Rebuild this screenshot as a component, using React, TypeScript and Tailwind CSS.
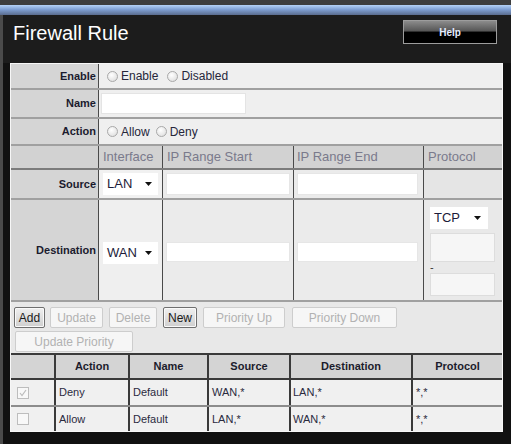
import React from "react";

function Radio() {
  return (
    <span className="inline-block w-[11px] h-[11px] rounded-full border border-[#a9a9a9] bg-[radial-gradient(circle_at_40%_35%,#ffffff,#d9d9d9)] shrink-0" />
  );
}

function Arrow() {
  return (
    <svg width="7" height="4" viewBox="0 0 7 4" className="shrink-0">
      <path d="M0 0 L7 0 L3.5 4 Z" fill="#111" />
    </svg>
  );
}

function Select({ label, w, pr }: { label: string; w: string; pr: string }) {
  return (
    <div className={`${w} h-[22px] bg-white flex items-center justify-between pl-[4px] ${pr} text-[13px] text-[#1c1c3a]`}>
      <span>{label}</span>
      <Arrow />
    </div>
  );
}

function Btn({ label, w, on }: { label: string; w: string; on?: boolean }) {
  return (
    <div
      className={
        on
          ? `${w} h-[21px] flex items-center justify-center rounded-[2px] border border-[#6f6f6f] bg-[linear-gradient(to_bottom,#f0f0f0,#cfcfcf)] text-[12px] text-[#1a1a1a] shadow-[inset_0_0_0_1px_#fafafa]`
          : `${w} h-[21px] flex items-center justify-center rounded-[2px] border border-[#cdcdcd] bg-[#f6f6f6] text-[12px] text-[#b2b2b2]`
      }
    >
      {label}
    </div>
  );
}

function Check({ checked }: { checked?: boolean }) {
  return (
    <span className="w-[12px] h-[12px] border border-[#bdbdbd] bg-[#f8f8f8] flex items-center justify-center">
      {checked ? (
        <svg width="8" height="8" viewBox="0 0 8 8">
          <path d="M1 4 L3 6.5 L7 1" stroke="#bcbcbc" strokeWidth="1.2" fill="none" />
        </svg>
      ) : null}
    </span>
  );
}

export default function App() {
  const labelCell =
    "w-[88px] shrink-0 border-r border-[#4a4a4a] bg-[#d5d5d5] flex items-center justify-end pr-[2px] text-[11px] font-bold text-[#1b1b2e]";
  return (
    <div className="w-[511px] h-[444px] overflow-hidden bg-[#111111] font-['Liberation_Sans',Arial,sans-serif]">
      <div className="h-[5px] bg-[#3d3d3d]" />
      <div className="h-[10px] bg-[linear-gradient(to_bottom,#b4d1f6,#7f9fd2_45%,#5a6c8e)]" />
      <div className="h-[429px] border-l-[3px] border-[#4b4b4b] flex flex-col">
        <div className="h-[48px] bg-[#1c1c1c] flex justify-between items-start pl-[10px] pr-[14px]">
          <div className="pt-[6px] text-[20px] leading-[24px] text-white">Firewall Rule</div>
          <div className="mt-[5px] w-[94px] h-[24px] border border-[#9d9d9d] bg-[linear-gradient(to_bottom,#8c8c8c_0%,#555555_46%,#000000_50%,#000000_100%)] flex items-center justify-center text-[10px] font-bold text-[#e4ecff]">
            Help
          </div>
        </div>
        <div className="ml-[7px] w-[493px] h-[369px] border border-[#f7f7f7] flex flex-col">
          {/* Enable */}
          <div className="flex h-[26px] border-b-2 border-[#a0a0a0]">
            <div className={labelCell}>Enable</div>
            <div className="flex-1 bg-[#efefef] flex items-center pl-[8px] text-[12px] text-[#26263a]">
              <Radio />
              <span className="ml-[3px]">Enable</span>
              <span className="ml-[9px]" />
              <Radio />
              <span className="ml-[3px]">Disabled</span>
            </div>
          </div>
          {/* Name */}
          <div className="flex h-[29px] border-b-2 border-[#a0a0a0]">
            <div className={labelCell}>Name</div>
            <div className="flex-1 bg-[#efefef] pl-[2px] pt-[3px]">
              <div className="w-[145px] h-[21px] bg-white border border-[#e4e4e4]" />
            </div>
          </div>
          {/* Action */}
          <div className="flex h-[27px] border-b-2 border-[#a0a0a0]">
            <div className={labelCell}>Action</div>
            <div className="flex-1 bg-[#efefef] flex items-center pl-[8px] text-[12px] text-[#26263a]">
              <Radio />
              <span className="ml-[3px]">Allow</span>
              <span className="ml-[6px]" />
              <Radio />
              <span className="ml-[3px]">Deny</span>
            </div>
          </div>
          {/* Header */}
          <div className="flex h-[24px] border-b-2 border-[#7c7c7c] text-[13px] text-[#7a7a8c]">
            <div className="w-[88px] shrink-0 border-r border-[#4a4a4a] bg-[#d2d2d2]" />
            <div className="w-[64px] shrink-0 border-r border-[#4a4a4a] bg-[#d2d2d2] flex items-center pl-[4px]">Interface</div>
            <div className="w-[131px] shrink-0 border-r border-[#4a4a4a] bg-[#d2d2d2] flex items-center pl-[4px]">IP Range Start</div>
            <div className="w-[130px] shrink-0 border-r border-[#4a4a4a] bg-[#d2d2d2] flex items-center pl-[3px]">IP Range End</div>
            <div className="flex-1 bg-[#d2d2d2] flex items-center pl-[4px]">Protocol</div>
          </div>
          {/* Source */}
          <div className="flex h-[30px] border-b-2 border-[#a0a0a0]">
            <div className={labelCell}>Source</div>
            <div className="w-[64px] shrink-0 border-r border-[#4a4a4a] bg-[#f1f1f1] pl-[4px] pt-[3px]">
              <Select label="LAN" w="w-[55px]" pr="pr-[6px]" />
            </div>
            <div className="w-[131px] shrink-0 border-r border-[#4a4a4a] bg-[#ebebeb] pl-[3px] pt-[3px]">
              <div className="w-[124px] h-[22px] bg-white border border-[#e6e6e6]" />
            </div>
            <div className="w-[130px] shrink-0 border-r border-[#4a4a4a] bg-[#ebebeb] pl-[3px] pt-[3px]">
              <div className="w-[121px] h-[22px] bg-white border border-[#e6e6e6]" />
            </div>
            <div className="flex-1 bg-[#e5e5e5]" />
          </div>
          {/* Destination */}
          <div className="flex h-[102px] border-b-2 border-[#a0a0a0]">
            <div className={labelCell}>Destination</div>
            <div className="w-[64px] shrink-0 border-r border-[#4a4a4a] bg-[#efefef] pl-[4px] pt-[42px]">
              <Select label="WAN" w="w-[55px]" pr="pr-[6px]" />
            </div>
            <div className="w-[131px] shrink-0 border-r border-[#4a4a4a] bg-[#ebebeb] pl-[3px] pt-[42px]">
              <div className="w-[124px] h-[20px] bg-white border border-[#e6e6e6]" />
            </div>
            <div className="w-[130px] shrink-0 border-r border-[#4a4a4a] bg-[#ebebeb] pl-[3px] pt-[42px]">
              <div className="w-[121px] h-[20px] bg-white border border-[#e6e6e6]" />
            </div>
            <div className="flex-1 bg-[#e9e9e9] pl-[6px] pt-[7px] flex flex-col">
              <Select label="TCP" w="w-[58px]" pr="pr-[7px]" />
              <div className="mt-[4px] w-[65px] h-[29px] bg-[#f6f6f6] border border-[#dddddd]" />
              <div className="h-[10px] text-[11px] leading-[10px] text-[#333]">-</div>
              <div className="mt-[1px] w-[65px] h-[23px] bg-[#f6f6f6] border border-[#dddddd]" />
            </div>
          </div>
          {/* Buttons */}
          <div className="h-[51px] bg-[#e8e8e8] flex flex-col pl-[3px] pt-[5px]">
            <div className="flex">
              <Btn label="Add" w="w-[31px]" on />
              <div className="ml-[5px]"><Btn label="Update" w="w-[53px]" /></div>
              <div className="ml-[6px]"><Btn label="Delete" w="w-[48px]" /></div>
              <div className="ml-[6px]"><Btn label="New" w="w-[34px]" on /></div>
              <div className="ml-[6px]"><Btn label="Priority Up" w="w-[82px]" /></div>
              <div className="ml-[7px]"><Btn label="Priority Down" w="w-[105px]" /></div>
            </div>
            <div className="mt-[3px] ml-[1px]">
              <Btn label="Update Priority" w="w-[118px]" />
            </div>
          </div>
          {/* Table */}
          <div className="border-t-2 border-[#3a3a3a]">
            <div className="flex h-[25px] border-b-2 border-[#3a3a3a] bg-[#d4d4d4] text-[11px] font-bold text-[#1c1c2c]">
              <div className="w-[45px] shrink-0 border-r-2 border-[#3a3a3a]" />
              <div className="w-[74px] shrink-0 border-r-2 border-[#3a3a3a] flex items-center justify-center">Action</div>
              <div className="w-[79px] shrink-0 border-r-2 border-[#3a3a3a] flex items-center justify-center">Name</div>
              <div className="w-[82px] shrink-0 border-r-2 border-[#3a3a3a] flex items-center justify-center">Source</div>
              <div className="w-[122px] shrink-0 border-r-2 border-[#3a3a3a] flex items-center justify-center">Destination</div>
              <div className="flex-1 flex items-center justify-center">Protocol</div>
            </div>
            {[
              { a: "Deny", s: "WAN,*", d: "LAN,*", c: true, h: "h-[27px] border-b-2 border-[#8c8c8c]" },
              { a: "Allow", s: "LAN,*", d: "WAN,*", c: false, h: "h-[24px]" },
            ].map((r) => (
              <div key={r.a} className={`flex ${r.h} bg-[#f0f0f0] text-[11px] text-[#2a2a3e]`}>
                <div className="w-[45px] shrink-0 border-r-2 border-[#3a3a3a] flex items-center pl-[6px]">
                  <Check checked={r.c} />
                </div>
                <div className="w-[74px] shrink-0 border-r-2 border-[#3a3a3a] flex items-center pl-[3px]">{r.a}</div>
                <div className="w-[79px] shrink-0 border-r-2 border-[#3a3a3a] flex items-center pl-[3px]">Default</div>
                <div className="w-[82px] shrink-0 border-r-2 border-[#3a3a3a] flex items-center pl-[3px]">{r.s}</div>
                <div className="w-[122px] shrink-0 border-r-2 border-[#3a3a3a] flex items-center pl-[2px]">{r.d}</div>
                <div className="flex-1 flex items-center pl-[3px]">*,*</div>
              </div>
            ))}
          </div>
        </div>
      </div>
    </div>
  );
}
